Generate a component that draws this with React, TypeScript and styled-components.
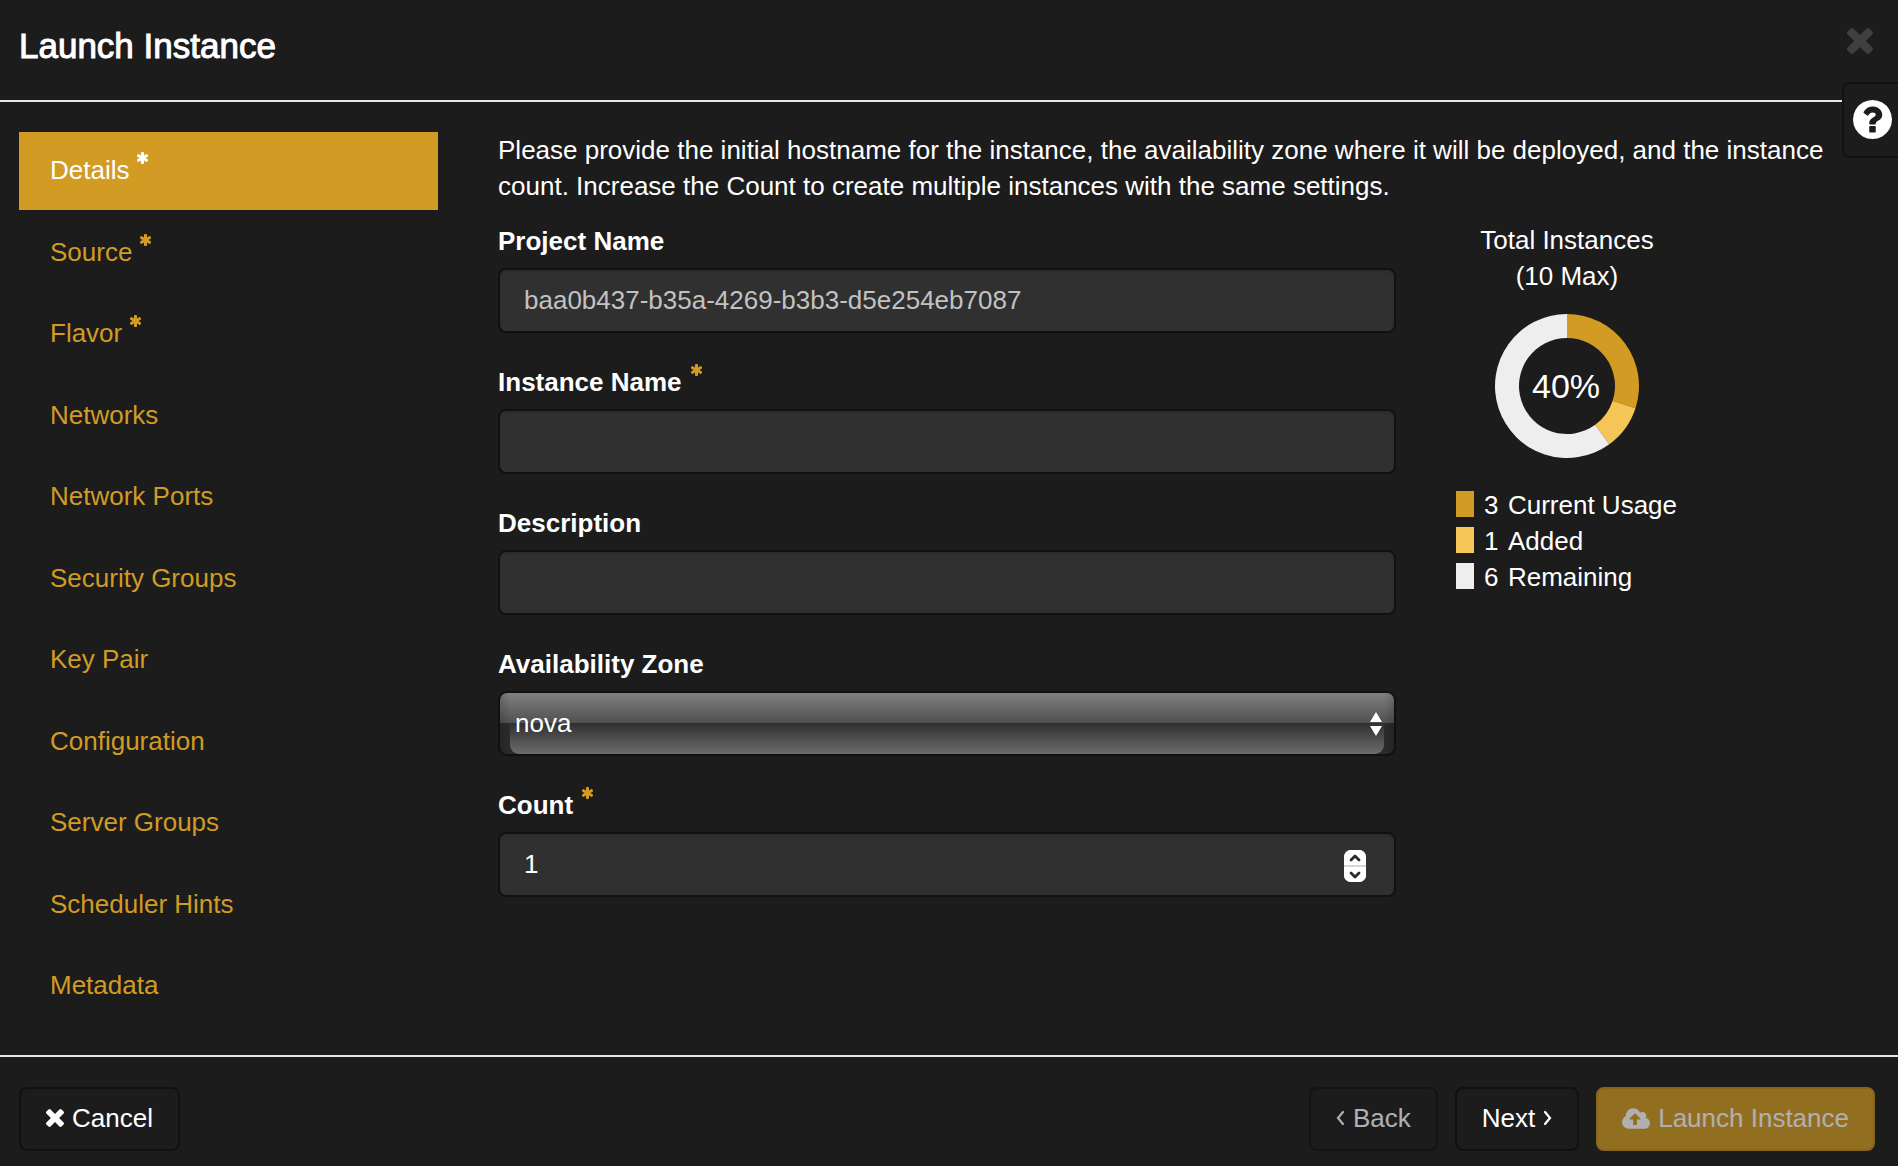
import React, { useState } from "react";
import styled, { createGlobalStyle } from "styled-components";

const c = {
  bg: "#1c1c1c",
  rule: "#e7e6e3",
  edge: "#111111",
  field: "#303030",
  gold: "#d19b24",
  amber: "#f6c558",
  pale: "#eeeeee",
};

const Global = createGlobalStyle`
  *, *::before, *::after { box-sizing: border-box; }
  body {
    margin: 0;
    background: ${c.bg};
    color: #fff;
    font-family: "Liberation Sans", Arial, Helvetica, sans-serif;
    font-size: 26px;
    line-height: 36px;
  }
  button, input, select { font: inherit; color: inherit; margin: 0; }
`;

const Dialog = styled.div`
  position: relative;
  display: flex;
  flex-direction: column;
  min-height: 100vh;
`;

const Header = styled.header`
  display: flex;
  justify-content: space-between;
  align-items: flex-start;
  padding: 22px 25px 30px 19px;
  border-bottom: 2px solid ${c.rule};
`;

const Title = styled.h1`
  margin: 0;
  font-size: 35px;
  line-height: 48px;
  font-weight: 400;
  -webkit-text-stroke: 1px #fff;
`;

const CloseButton = styled.button`
  display: flex;
  padding: 6px 0;
  border: 0;
  background: none;
  color: #3f3f3f;
  cursor: pointer;
`;

const HelpButton = styled.button`
  position: absolute;
  top: 82px;
  right: 0;
  display: flex;
  align-items: center;
  height: 76px;
  padding: 0 6px 2px 9px;
  border: 2px solid ${c.edge};
  border-right: 0;
  border-radius: 7px 0 0 7px;
  background: ${c.bg};
  color: #fff;
  cursor: pointer;
`;

const Body = styled.div`
  flex: 1;
  display: grid;
  grid-template-columns: 7fr 15fr 7fr;
  grid-template-rows: auto 1fr;
  column-gap: 60px;
  row-gap: 18px;
  padding: 30px 23px 30px 19px;
`;

const Nav = styled.nav`
  grid-row: 1 / 3;
  display: flex;
  flex-direction: column;
  justify-content: space-between;
`;

const NavLink = styled.a<{ $active?: boolean }>`
  display: flex;
  gap: 8px;
  padding: 20px 31px 22px;
  text-decoration: none;
  color: ${(p) => (p.$active ? "#fff" : c.gold)};
  background: ${(p) => (p.$active ? c.gold : "transparent")};
`;

const Intro = styled.p`
  grid-column: 2 / 4;
  margin: 0;
`;

const Form = styled.form`
  display: flex;
  flex-direction: column;
  gap: 31px;
  padding-top: 1px;
`;

const Field = styled.div`
  display: flex;
  flex-direction: column;
  gap: 9px;
`;

const Label = styled.label`
  display: flex;
  gap: 9px;
  font-weight: 700;
`;

const Star = styled.span<{ $tone?: string }>`
  display: flex;
  color: ${(p) => p.$tone || "inherit"};
`;

const Input = styled.input`
  display: block;
  width: 100%;
  height: 65px;
  padding: 0 24px;
  border: 2px solid ${c.edge};
  border-radius: 8px;
  background: ${c.field};
  box-shadow: inset 0 2px 2px rgba(0, 0, 0, 0.1);
  outline: 0;
  appearance: textfield;
  &:disabled { color: #c2c2c2; }
  &::-webkit-inner-spin-button { appearance: none; }
`;

const ControlBox = styled.div`
  position: relative;
`;

const SelectFace = styled.div`
  position: relative;
  height: 65px;
  overflow: hidden;
  border: 2px solid ${c.edge};
  border-radius: 9px;
  background:
    linear-gradient(90deg, rgba(0, 0, 0, 0.14), transparent 10px, transparent calc(100% - 10px), rgba(0, 0, 0, 0.14)),
    linear-gradient(#808080, #505050) top / 100% 30px no-repeat,
    #2b2b2b;
  &::before {
    content: "";
    position: absolute;
    inset: 30px 10px 0;
    border-radius: 0 0 9px 9px;
    background: linear-gradient(#2f2f2f, #6c6c6c);
  }
`;

const Select = styled.select`
  position: relative;
  display: block;
  width: 100%;
  height: 60px;
  padding: 0 40px 0 15px;
  border: 0;
  appearance: none;
  background: transparent;
  outline: 0;
  option { background: ${c.field}; }
`;

const SelectArrows = styled.svg`
  position: absolute;
  right: 12px;
  top: 19px;
  pointer-events: none;
`;

const Spinner = styled.div`
  position: absolute;
  right: 30px;
  top: 18px;
  display: flex;
  flex-direction: column;
  width: 22px;
  height: 32px;
  border-radius: 7px;
  overflow: hidden;
  background: #fff;
`;

const SpinButton = styled.button`
  flex: 1;
  display: flex;
  align-items: center;
  justify-content: center;
  padding: 0;
  border: 0;
  background: #fff;
  color: #2a2a2a;
  & + & { border-top: 2px solid #d6d6d6; }
`;

const Quota = styled.section`
  display: flex;
  flex-direction: column;
  align-items: center;
  width: max-content;
`;

const QuotaTitle = styled.div`
  text-align: center;
  margin-bottom: 20px;
`;

const Legend = styled.ul`
  list-style: none;
  margin: 29px 0 0;
  padding: 0;
`;

const LegendItem = styled.li`
  display: flex;
  width: 222px;
`;

const Swatch = styled.span<{ $color: string }>`
  width: 18px;
  height: 26px;
  margin: 4px 10px 4px 0;
  background: ${(p) => p.$color};
`;

const Amount = styled.span`
  width: 24px;
`;

const Footer = styled.footer`
  display: flex;
  gap: 17px;
  padding: 30px 23px 15px 19px;
  border-top: 2px solid ${c.rule};
`;

const Button = styled.button<{ $primary?: boolean; $first?: boolean }>`
  display: flex;
  align-items: center;
  gap: 8px;
  height: 64px;
  padding: 0 ${(p) => (p.$primary ? "24px" : "25px")} 2px;
  margin-right: ${(p) => (p.$first ? "auto" : "0")};
  border: 2px solid ${(p) => (p.$primary ? "#c28d1c" : c.edge)};
  border-radius: 8px;
  background: ${(p) => (p.$primary ? c.gold : c.bg)};
  color: #fff;
  cursor: pointer;
  &:disabled { opacity: 0.65; cursor: default; }
`;

const X_PATH =
  "M1490 1322q0 40-28 68l-136 136q-28 28-68 28t-68-28l-294-294-294 294q-28 28-68 28t-68-28l-136-136q-28-28-28-68t28-68l294-294-294-294q-28-28-28-68t28-68l136-136q28-28 68-28t68 28l294 294 294-294q28-28 68-28t68 28l136 136q28 28 28 68t-28 68l-294 294 294 294q28 28 28 68z";

const CrossIcon = ({ size }: { size: number }) => (
  <svg width={size} height={size} viewBox="302 366 1188 1188" fill="currentColor" aria-hidden="true">
    <path d={X_PATH} />
  </svg>
);

const HelpIcon = () => (
  <svg width="39" height="39" viewBox="128 128 1536 1536" fill="currentColor" aria-hidden="true">
    <path d="M1024 1376v-192q0-14-9-23t-23-9h-192q-14 0-23 9t-9 23v192q0 14 9 23t23 9h192q14 0 23-9t9-23zm256-672q0-88-55.5-163t-138.5-116-170-41q-243 0-371 213-15 24 8 42l132 100q7 6 19 6 16 0 25-12 53-68 86-92 34-24 86-24 48 0 85.5 26t37.5 59q0 38-20 61t-68 45q-63 28-115.5 86.5t-52.5 125.5v36q0 14 9 23t23 9h192q14 0 23-9t9-23q0-19 21.5-49.5t54.5-49.5q32-18 49-28.5t46-35 44.5-48 28-60.5 12.5-81zm384 192q0 209-103 385.5t-279.5 279.5-385.5 103-385.5-103-279.5-279.5-103-385.5 103-385.5 279.5-279.5 385.5-103 385.5 103 279.5 279.5 103 385.5z" />
  </svg>
);

const CloudIcon = () => (
  <svg width="28" height="21" viewBox="0 128 1920 1408" fill="currentColor" aria-hidden="true">
    <path
      fillRule="evenodd"
      d="M1280 864q0-14-9-23L919 489q-9-9-23-9t-23 9L522 840q-10 12-10 24 0 14 9 23t23 9h224v352q0 13 9.500 22.500t22.500 9.500h192q13 0 22.500-9.500t9.500-22.500V896h224q13 0 22.500-9.500T1280 864zM1920 1152q0 159-112.500 271.500T1536 1536H448q-185 0-316.500-131.500T0 1088q0-130 70-240t188-165q-2-30-2-43 0-212 150-362t362-150q156 0 285.500 87T1242 446q71-62 166-62 106 0 181 75t75 181q0 76-41 138 130 31 213.500 135.500T1920 1152z"
    />
  </svg>
);

const AsteriskIcon = () => (
  <svg width="12" height="12" viewBox="128 128 1536 1536" fill="currentColor" aria-hidden="true">
    <path d="M1482 1050q46 26 59.500 77.500t-12.500 97.500l-64 110q-26 46-77.500 59.500t-97.500-12.500l-266-153v307q0 52-38 90t-90 38h-128q-52 0-90-38t-38-90v-307l-266 153q-46 26-97.500 12.500t-77.500-59.500l-64-110q-26-46-12.500-97.500t59.500-77.500l266-154-266-154q-46-26-59.500-77.500t12.500-97.500l64-110q26-46 77.500-59.500t97.500 12.500l266 153v-307q0-52 38-90t90-38h128q52 0 90 38t38 90v307l266-153q46-26 97.500-12.500t77.500 59.500l64 110q26 46 12.500 97.500t-59.500 77.500l-266 154z" />
  </svg>
);

const Angle = ({ d }: { d: string }) => (
  <svg width="9" height="16" viewBox="0 0 9 16" fill="none" stroke="currentColor" strokeWidth="2.2" strokeLinecap="round" aria-hidden="true">
    <path d={d} />
  </svg>
);

const SpinChevron = ({ d }: { d: string }) => (
  <svg width="12" height="8" viewBox="0 0 12 8" fill="none" stroke="currentColor" strokeWidth="2.8" strokeLinecap="round" strokeLinejoin="round" aria-hidden="true">
    <path d={d} />
  </svg>
);

const steps = [
  { name: "Details", required: true },
  { name: "Source", required: true },
  { name: "Flavor", required: true },
  { name: "Networks" },
  { name: "Network Ports" },
  { name: "Security Groups" },
  { name: "Key Pair" },
  { name: "Configuration" },
  { name: "Server Groups" },
  { name: "Scheduler Hints" },
  { name: "Metadata" },
];

const usage = [
  { amount: 3, label: "Current Usage", color: c.gold },
  { amount: 1, label: "Added", color: c.amber },
  { amount: 6, label: "Remaining", color: c.pale },
];

function Donut() {
  let start = 0;
  const point = (t: number, r: number) => {
    const a = t * Math.PI * 2;
    return `${72 + r * Math.sin(a)} ${72 - r * Math.cos(a)}`;
  };
  return (
    <svg width="144" height="144" viewBox="0 0 144 144" role="img" aria-label="40% used">
      {usage.map((u) => {
        const from = start / 10;
        start += u.amount;
        const to = start / 10;
        const large = to - from > 0.5 ? 1 : 0;
        return (
          <path
            key={u.label}
            fill={u.color}
            d={`M${point(from, 72)}A72 72 0 ${large} 1 ${point(to, 72)}L${point(to, 48)}A48 48 0 ${large} 0 ${point(from, 48)}Z`}
          />
        );
      })}
      <text x="71" y="84" fill="#fff" fontSize="34" textAnchor="middle">
        40%
      </text>
    </svg>
  );
}

function FieldLabel({ id, text, required }: { id: string; text: string; required?: boolean }) {
  return (
    <Label htmlFor={id}>
      {text}
      {required && (
        <Star $tone={c.gold}>
          <AsteriskIcon />
        </Star>
      )}
    </Label>
  );
}

export default function App() {
  const [count, setCount] = useState(1);
  return (
    <Dialog role="dialog" aria-labelledby="title">
      <Global />
      <Header>
        <Title id="title">Launch Instance</Title>
        <CloseButton type="button" aria-label="Close">
          <CrossIcon size={26} />
        </CloseButton>
      </Header>
      <HelpButton type="button" aria-label="Help">
        <HelpIcon />
      </HelpButton>

      <Body>
        <Nav>
          {steps.map((s, i) => (
            <NavLink key={s.name} href="#" $active={i === 0}>
              {s.name}
              {s.required && (
                <Star>
                  <AsteriskIcon />
                </Star>
              )}
            </NavLink>
          ))}
        </Nav>

        <Intro>
          Please provide the initial hostname for the instance, the availability zone where it will be
          deployed, and the instance count. Increase the Count to create multiple instances with the same
          settings.
        </Intro>

        <Form>
          <Field>
            <FieldLabel id="project" text="Project Name" />
            <Input id="project" disabled value="baa0b437-b35a-4269-b3b3-d5e254eb7087" />
          </Field>
          <Field>
            <FieldLabel id="name" text="Instance Name" required />
            <Input id="name" />
          </Field>
          <Field>
            <FieldLabel id="description" text="Description" />
            <Input id="description" />
          </Field>
          <Field>
            <FieldLabel id="zone" text="Availability Zone" />
            <SelectFace>
              <Select id="zone">
                <option>nova</option>
              </Select>
              <SelectArrows width="12" height="24" viewBox="0 0 12 24" fill="#fff" aria-hidden="true">
                <path d="M6 0L12 10H0zM0 14H12L6 24z" />
              </SelectArrows>
            </SelectFace>
          </Field>
          <Field>
            <FieldLabel id="count" text="Count" required />
            <ControlBox>
              <Input
                id="count"
                type="number"
                min={1}
                value={count}
                onChange={(e) => setCount(Number(e.target.value))}
              />
              <Spinner>
                <SpinButton type="button" aria-label="Increase count" onClick={() => setCount(count + 1)}>
                  <SpinChevron d="M2 6L6 2L10 6" />
                </SpinButton>
                <SpinButton type="button" aria-label="Decrease count" onClick={() => setCount(Math.max(1, count - 1))}>
                  <SpinChevron d="M2 2L6 6L10 2" />
                </SpinButton>
              </Spinner>
            </ControlBox>
          </Field>
        </Form>

        <Quota>
          <QuotaTitle>
            Total Instances
            <br />
            (10 Max)
          </QuotaTitle>
          <Donut />
          <Legend>
            {usage.map((u) => (
              <LegendItem key={u.label}>
                <Swatch $color={u.color} />
                <Amount>{u.amount}</Amount>
                {u.label}
              </LegendItem>
            ))}
          </Legend>
        </Quota>
      </Body>

      <Footer>
        <Button type="button" $first>
          <CrossIcon size={18} />
          Cancel
        </Button>
        <Button type="button" disabled>
          <Angle d="M7 2L2 8L7 14" />
          Back
        </Button>
        <Button type="button">
          Next
          <Angle d="M2 2L7 8L2 14" />
        </Button>
        <Button type="button" $primary disabled>
          <CloudIcon />
          Launch Instance
        </Button>
      </Footer>
    </Dialog>
  );
}
